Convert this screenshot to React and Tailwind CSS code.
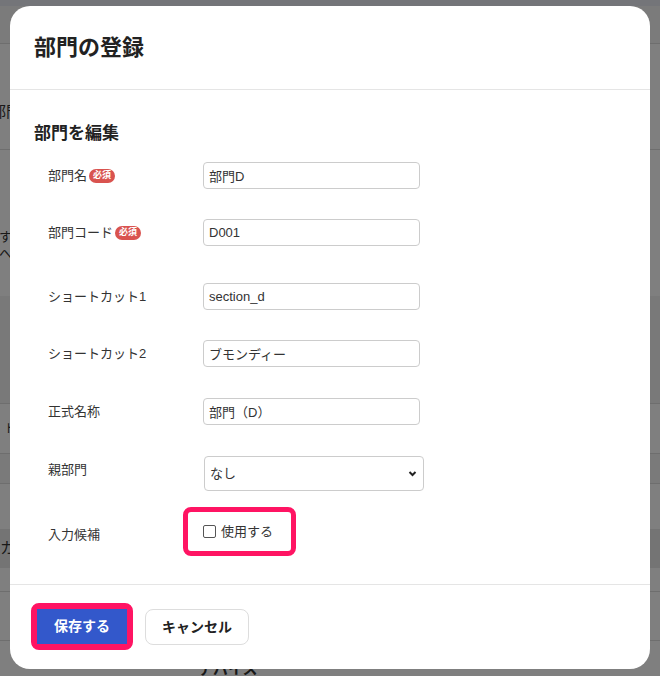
import React, { useState } from 'react'

const FONT = { fontFamily: '"Liberation Sans", "Noto Sans CJK JP", sans-serif' }

const TEXT_FIELDS = [
  { label: '部門名', value: '部門D', required: true, mt: 'mt-0' },
  { label: '部門コード', value: 'D001', required: true, mt: 'mt-[30px]' },
  { label: 'ショートカット1', value: 'section_d', mt: 'mt-[37px]' },
  { label: 'ショートカット2', value: 'ブモンディー', mt: 'mt-[30px]' },
  { label: '正式名称', value: '部門（D）', mt: 'mt-[31px]' },
]

function RequiredBadge() {
  return (
    <span className="ml-[2px] inline-flex h-[14px] items-center rounded-full bg-[#d9534f] px-[4px] text-[9px] font-bold leading-none text-white">
      必須
    </span>
  )
}

function BackgroundPage() {
  return (
    <div className="flex h-full flex-col bg-white text-[13px] text-[#333]">
      <div className="h-[6px] bg-[#e8eaf2]" />
      <div className="h-[39px] border-b border-[#ddd] bg-[#f6f6f6]" />
      <div className="flex h-[108px] items-end border-b border-[#ddd] pb-[26px] text-[15px]">
        <span className="-ml-[9px]">部門</span>
      </div>
      <div className="h-[80px]" />
      <div className="-ml-[1px] leading-[17px]">
        <div>すべ</div>
        <div>へ</div>
      </div>
      <div className="h-[35px]" />
      <div className="h-[110px] border-b border-[#ddd] bg-[#f2f2f2]" />
      <div className="flex h-[52px] items-center border-b border-[#ddd] pl-[4px] text-[12px]">ト</div>
      <div className="h-[30px] border-b border-[#ddd] bg-[#f4f4f4]" />
      <div className="mt-[45px] flex h-[40px] items-center bg-[#e9e9e9] text-[15px]">カ</div>
      <div className="h-[25px] border-b border-[#ddd]" />
      <div className="h-[50px] border-b border-[#ddd]" />
      <div className="pl-[198px] pt-[20px] text-[15px] font-bold leading-none">デバイス</div>
    </div>
  )
}

export default function App() {
  const [useSuggest, setUseSuggest] = useState(false)

  return (
    <div className="relative h-[676px] w-[660px] overflow-hidden" style={FONT}>
      <BackgroundPage />
      <div className="absolute inset-0 bg-black/50" />

      <div className="absolute left-[10px] top-[6px] flex h-[663px] w-[640px] flex-col overflow-hidden rounded-[20px] bg-white text-[#333]">
        <div className="flex h-[84px] shrink-0 items-center border-b border-[#e5e5e5] pl-[24px] pb-[1px]">
          <h1 className="text-[22px] font-bold text-[#222]">部門の登録</h1>
        </div>

        <div className="flex-1 pl-[24px] pt-[32px]">
          <h2 className="text-[17px] font-bold leading-[24px] text-[#222]">部門を編集</h2>

          <div className="mt-[16px] pl-[14px]">
            {TEXT_FIELDS.map(f => (
              <div key={f.label} className={`flex items-center ${f.mt}`}>
                <div className="flex w-[155px] items-center text-[13px]">
                  {f.label}
                  {f.required && <RequiredBadge />}
                </div>
                <input
                  defaultValue={f.value}
                  className="h-[27px] w-[217px] rounded-[4px] border border-[#ccc] px-[5px] text-[13px] text-[#333] outline-none"
                />
              </div>
            ))}

            <div className="mt-[31px] flex items-start">
              <div className="w-[156px] pt-[4px] text-[13px]">親部門</div>
              <div className="relative">
                <select className="h-[35px] w-[220px] appearance-none rounded-[4px] border border-[#ccc] bg-white px-[5px] text-[13px] text-[#333] outline-none">
                  <option>なし</option>
                </select>
                <svg viewBox="0 0 12 12" className="pointer-events-none absolute right-[7px] top-[13px] h-[9px] w-[9px]">
                  <path d="M2 4l4 4 4-4" fill="none" stroke="#222" strokeWidth="2.6" />
                </svg>
              </div>
            </div>

            <div className="mt-[16px] flex items-center">
              <div className="w-[135px] pt-[6px] text-[13px]">入力候補</div>
              <div className="flex h-[49px] w-[113px] items-start rounded-[8px] border-[5px] border-[#ff1463] pl-[15px] pt-[10px]">
                <label className="flex items-center gap-[5px] text-[13px]">
                  <input
                    type="checkbox"
                    checked={useSuggest}
                    onChange={e => setUseSuggest(e.target.checked)}
                    className="h-[13px] w-[13px] appearance-none rounded-[2px] border border-[#555] bg-white checked:bg-[#3358cb]"
                  />
                  使用する
                </label>
              </div>
            </div>
          </div>
        </div>

        <div className="flex h-[85px] shrink-0 items-start gap-[12px] border-t border-[#e5e5e5] pl-[21px] pt-[18px]">
          <div className="rounded-[8px] border-[6px] border-[#ff1463]">
            <button className="h-[35px] w-[90px] bg-[#3358cb] text-[14px] font-bold text-white">保存する</button>
          </div>
          <button className="mt-[6px] h-[36px] w-[104px] rounded-[8px] border border-[#ddd] bg-white text-[14px] font-bold text-[#222]">
            キャンセル
          </button>
        </div>
      </div>
    </div>
  )
}
